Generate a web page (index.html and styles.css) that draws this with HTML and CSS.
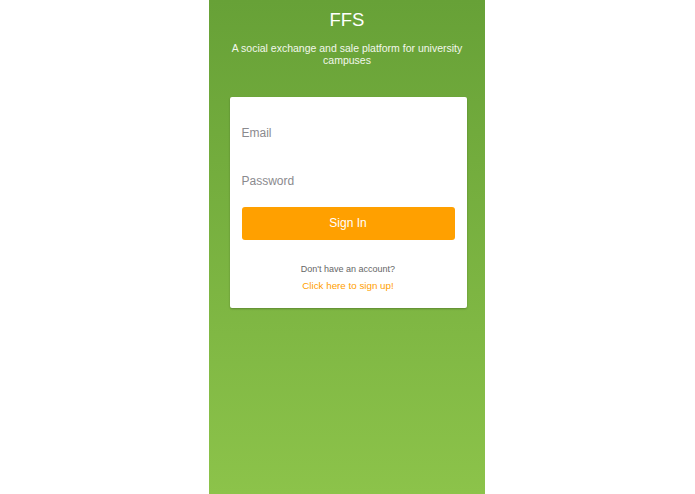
FILE: index.html
```html
<!DOCTYPE html>
<html>
<head>
<meta charset="utf-8">
<link rel="stylesheet" href="styles.css">
</head>
<body>
<div class="panel">
  <h1 class="title">FFS</h1>
  <p class="subtitle">A social exchange and sale platform for university campuses</p>
  <div class="card">
    <div class="field">Email</div>
    <div class="field">Password</div>
    <div class="btn">Sign In</div>
    <p class="prompt">Don't have an account?</p>
    <p class="link">Click here to sign up!</p>
  </div>
</div>
</body>
</html>
```
FILE: styles.css
```css
html, body {
  margin: 0;
  padding: 0;
  background: #ffffff;
  height: 100%;
}
body {
  font-family: "Liberation Sans", Arial, sans-serif;
}
.panel {
  width: 276px;
  height: 494px;
  margin-left: calc((100% - 277px) / 2);
  background: linear-gradient(to bottom, #67a137 0%, #8cc34a 100%);
  display: flex;
  flex-direction: column;
  align-items: center;
  padding-top: 8px;
  box-sizing: border-box;
}
.title {
  margin: 0;
  font-weight: normal;
  font-size: 18.5px;
  line-height: 24px;
  color: #ffffff;
}
.subtitle {
  margin: 10px 0 0;
  padding: 0 20px;
  font-size: 10.5px;
  line-height: 12px;
  color: #f2f7ec;
  text-align: center;
}
.card {
  margin-top: 31px;
  margin-left: 2px;
  width: 237px;
  box-sizing: border-box;
  background: #ffffff;
  padding: 12px 12px 15px;
  border-radius: 2px;
  box-shadow: 0 1px 2px rgba(0,0,0,0.25);
}
.field {
  height: 48px;
  line-height: 48px;
  font-size: 12px;
  color: #8a8a8e;
}
.btn {
  margin-top: 2px;
  height: 33px;
  line-height: 33px;
  background: #ffa000;
  color: #ffffff;
  text-align: center;
  font-size: 12px;
  border-radius: 3px;
}
.prompt {
  margin: 22px 0 0;
  font-size: 9px;
  line-height: 14px;
  color: #666666;
  text-align: center;
}
.link {
  margin: 3px 0 0;
  font-size: 9.8px;
  line-height: 14px;
  color: #ffa000;
  text-align: center;
}
```
